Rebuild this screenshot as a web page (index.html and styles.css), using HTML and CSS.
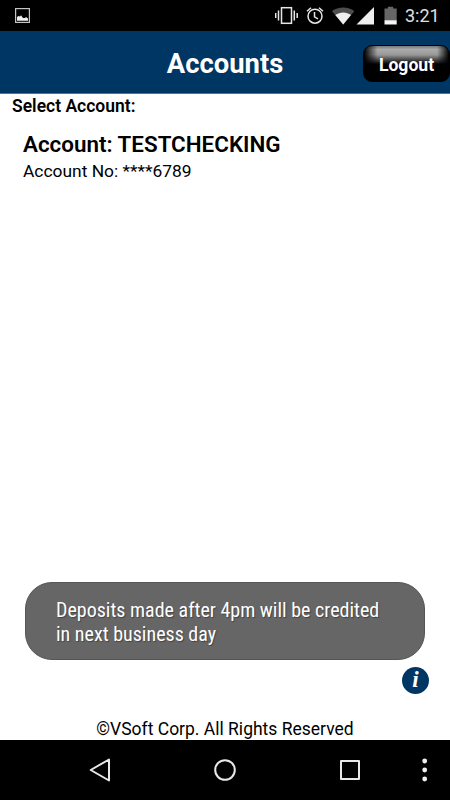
FILE: index.html
```html
<!DOCTYPE html>
<html lang="en">
<head>
    <meta charset="UTF-8">
    <meta name="viewport" content="width=device-width, initial-scale=1.0">
    <title>Accounts</title>
    <link rel="stylesheet" href="styles.css">
</head>
<body>
    <div class="status-bar">
        <svg class="picture-icon" width="15" height="15" viewBox="0 0 15 15">
            <rect x="0.6" y="0.6" width="13.8" height="13.8" fill="none" stroke="#c4c4c4" stroke-width="1.2"/>
            <path d="M2 12.7V9l1.5-1 1.5.6L6 7.2l2 2.8h2l1-1 2 1.5v2.2z" fill="#eee"/>
        </svg>
        <svg class="status-icons" width="140" height="20" viewBox="0 0 140 20">
            <g fill="none" stroke="#e6e6e6" stroke-width="1.5">
                <rect x="6.5" y="2.7" width="10" height="15.6"/>
                <path d="M3.5 5.5v10M.7 8v5M19.3 5.5v10M22.2 8v5"/>
                <circle cx="40" cy="11.2" r="7"/>
                <path d="M39.5 7v4.8l3.5 2M32 6.3l4-3.6M48 6.3l-4-3.6"/>
            </g>
            <path d="M57 6.2C63 1.3 73.5 1.3 79.3 6.2L68.2 19.5z" fill="#4d4d4d"/>
            <path d="M60.3 10C65 6.6 71.5 6.6 76 10L68.2 19.5z" fill="#eee"/>
            <path d="M99 2v17.5H81.5z" fill="#eee"/>
            <path d="M109.5 3.5h3.3V1.8h5.4v1.7h3.5v11.7h-12.2z" fill="#666"/>
            <path d="M109.5 15.2h12.2v4.3h-12.2z" fill="#f5f5f5"/>
        </svg>
        <span class="time">3:21</span>
    </div>
    <header class="header">
        <h1>Accounts</h1>
        <button class="logout">Logout</button>
    </header>
    <main class="content">
        <h2>Select Account:</h2>
        <div class="account">
            <div class="account-name">Account: TESTCHECKING</div>
            <div class="account-number">Account No: ****6789</div>
        </div>
        <div class="toast">
            <div class="toast-text">Deposits made after 4pm will be credited<br>in next business day</div>
        </div>
        <div class="info">i</div>
    </main>
    <footer class="footer">©VSoft Corp. All Rights Reserved</footer>
    <nav class="nav-bar">
        <svg width="450" height="60" viewBox="0 0 450 60">
            <g fill="none" stroke="#e8e8e8" stroke-width="2" stroke-linejoin="round">
                <path d="M109 19.5v21L90.7 30z"/>
                <circle cx="225" cy="30" r="9.8"/>
                <rect x="341" y="21" width="18" height="18"/>
            </g>
            <g fill="#f0f0f0">
                <circle cx="424.7" cy="21" r="2.4"/>
                <circle cx="424.7" cy="30" r="2.4"/>
                <circle cx="424.7" cy="39" r="2.4"/>
            </g>
        </svg>
    </nav>
</body>
</html>
```
FILE: styles.css
```css
body {
    display: flex;
    flex-direction: column;
    width: 450px;
    height: 800px;
    margin: 0;
    overflow: hidden;
    background-color: #fff;
    color: #000;
    font-family: Roboto, sans-serif;
}
.status-bar {
    display: flex;
    flex: 0 0 31px;
    align-items: flex-start;
    background-color: #000;
}
.picture-icon {
    margin: 8px 0 0 15px;
}
.status-icons {
    margin: 5px 0 0 245px;
}
.time {
    margin: 1px 0 0 -10px;
    font-size: 18px;
    line-height: 30px;
    color: #e0e0e0;
}
.header {
    display: grid;
    grid-template-columns: 1fr auto 1fr;
    align-items: center;
    box-sizing: border-box;
    flex: 0 0 63px;
    background-color: #003663;
    border-bottom: 1px solid #5e6f92;
}
.header h1 {
    grid-column: 2;
    margin: 4px 0 0;
    font-size: 27.4px;
    line-height: 34px;
    font-weight: 700;
    color: #fff;
}
.logout {
    justify-self: end;
    width: 87px;
    height: 37px;
    margin: 2px 0 0;
    padding: 3px 0 0;
    border: 1px solid #000;
    border-radius: 9px;
    background: linear-gradient(90deg, #000, transparent 16%, transparent 86%, #000), linear-gradient(#777 0, #aaa 10%, #999 25%, #333 43%, #000 52%);
    font-family: Roboto, sans-serif;
    font-size: 17.6px;
    font-weight: 700;
    color: #fff;
}
.content {
    position: relative;
    flex: 1;
}
.content h2 {
    margin: 1px 0 0 12px;
    font-size: 17.5px;
    line-height: 22px;
    font-weight: 600;
}
.account {
    padding: 13px 23px;
}
.account-name {
    font-size: 22.4px;
    line-height: 28px;
    font-weight: 600;
}
.account-number {
    font-size: 17.4px;
    line-height: 26px;
}
.toast {
    position: absolute;
    left: 25px;
    bottom: 58px;
    box-sizing: border-box;
    width: 400px;
    height: 78px;
    padding: 15px 30px;
    border: 1px solid #555;
    border-radius: 27px;
    background-color: #666;
    color: #fff;
}
.toast-text {
    font-family: "Roboto Condensed", Roboto, sans-serif;
    font-stretch: 75%;
    font-size: 20px;
    line-height: 24px;
    white-space: nowrap;
    text-shadow: 1px 1px 1px #444;
}
.info {
    position: absolute;
    right: 21px;
    bottom: 24px;
    width: 27px;
    height: 27px;
    border-radius: 50%;
    background-color: #003663;
    font: italic bold 23px/26px "Liberation Serif", serif;
    text-align: center;
    color: #fff;
}
.footer {
    flex: 0 0 22px;
    font-size: 17.5px;
    line-height: 22px;
    text-align: center;
}
.nav-bar {
    flex: 0 0 60px;
    background-color: #000;
}
.nav-bar svg {
    display: block;
}
```
